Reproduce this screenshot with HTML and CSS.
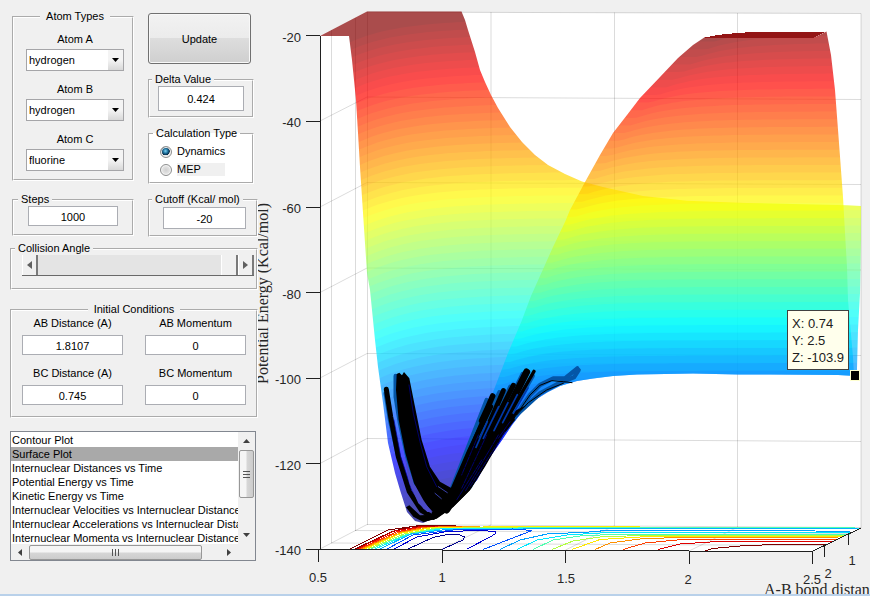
FILE: index.html
```html
<!DOCTYPE html>
<html lang="en">
<head>
    <meta charset="UTF-8">
    <meta name="viewport" content="width=device-width, initial-scale=1.0">
    <title>Potential Energy Surface</title>
    <link rel="stylesheet" href="styles.css">
</head>
<body>
    <form class="sidebar">
        <div class="columns">
            <div class="col-left">
                <fieldset class="atoms">
                    <legend>Atom Types</legend>
                    <div class="field">
                        <label for="atomA">Atom A</label>
                        <select id="atomA" class="dropdown"><option>hydrogen</option><option>fluorine</option></select>
                    </div>
                    <div class="field">
                        <label for="atomB">Atom B</label>
                        <select id="atomB" class="dropdown"><option>hydrogen</option><option>fluorine</option></select>
                    </div>
                    <div class="field">
                        <label for="atomC">Atom C</label>
                        <select id="atomC" class="dropdown"><option>fluorine</option><option>hydrogen</option></select>
                    </div>
                </fieldset>
                <fieldset class="steps">
                    <legend>Steps</legend>
                    <input type="text" aria-label="Steps" value="1000">
                </fieldset>
            </div>
            <div class="col-right">
                <button type="button" class="update">Update</button>
                <fieldset class="delta">
                    <legend>Delta Value</legend>
                    <input type="text" aria-label="Delta Value" value="0.424">
                </fieldset>
                <fieldset class="calc">
                    <legend>Calculation Type</legend>
                    <div class="radio-row">
                        <input type="radio" id="dynamics" name="calc" checked>
                        <label for="dynamics">Dynamics</label>
                    </div>
                    <div class="radio-row">
                        <input type="radio" id="mep" name="calc">
                        <label for="mep" class="shaded">MEP</label>
                    </div>
                </fieldset>
                <fieldset class="cutoff">
                    <legend>Cutoff (Kcal/ mol)</legend>
                    <input type="text" aria-label="Cutoff (Kcal/ mol)" value="-20">
                </fieldset>
            </div>
        </div>

        <fieldset class="collision">
            <legend>Collision Angle</legend>
            <div class="slider">
                <button type="button" class="step" aria-label="Decrease"><svg width="5" height="8"><path d="M5 0V8L0 4Z"/></svg></button>
                <input type="range" aria-label="Collision Angle" min="0" max="180" value="180">
                <button type="button" class="step" aria-label="Increase"><svg width="5" height="8"><path d="M0 0V8L5 4Z"/></svg></button>
            </div>
        </fieldset>

        <fieldset class="initial">
            <legend>Initial Conditions</legend>
            <div class="grid">
                <div class="field"><label for="abd">AB Distance (A)</label><input type="text" id="abd" value="1.8107"></div>
                <div class="field"><label for="abm">AB Momentum</label><input type="text" id="abm" value="0"></div>
                <div class="field"><label for="bcd">BC Distance (A)</label><input type="text" id="bcd" value="0.745"></div>
                <div class="field"><label for="bcm">BC Momentum</label><input type="text" id="bcm" value="0"></div>
            </div>
        </fieldset>

        <div class="listbox">
            <select size="8" aria-label="Plot type">
                <option>Contour Plot</option>
                <option selected>Surface Plot</option>
                <option>Internuclear Distances vs Time</option>
                <option>Potential Energy vs Time</option>
                <option>Kinetic Energy vs Time</option>
                <option>Internuclear Velocities vs Internuclear Distance</option>
                <option>Internuclear Accelerations vs Internuclear Distance</option>
                <option>Internuclear Momenta vs Internuclear Distance</option>
            </select>
            <div class="vbar" aria-hidden="true">
                <svg class="arrow" width="7" height="4"><path d="M0 4H7L3.5 0Z"/></svg>
                <span class="thumb"><svg width="7" height="9"><path d="M0 1.5H7M0 4.5H7M0 7.5H7" stroke="#555"/></svg></span>
                <svg class="arrow end" width="7" height="4"><path d="M0 0H7L3.5 4Z"/></svg>
            </div>
            <div class="hbar" aria-hidden="true">
                <svg class="arrow" width="4" height="7"><path d="M4 0V7L0 3.5Z"/></svg>
                <span class="thumb"><svg width="9" height="7"><path d="M1.5 0V7M4.5 0V7M7.5 0V7" stroke="#555"/></svg></span>
                <svg class="arrow end" width="4" height="7"><path d="M0 0V7L4 3.5Z"/></svg>
            </div>
        </div>
    </form>

    <main class="plot">
        <svg class="axes" viewBox="258 0 612 594" role="img" aria-label="Potential energy surface">
            <defs>
                <clipPath id="backClip"><path d="M320 36L367 11.5H461.5L465 20L468 30L475 52L480 70L485 82L491 95L498 108L510 127L522 142L535 155L548 165L565 174L582 181.5L603 187L643 196L687 200.7L747 203L793 204L847 205.3L861 206V240L860 293L858 330L857 368V376L838 375L770 374.5H738L693 373.5L637 374.5L613 376L593 378.5L577 381L560 386L548 392L535 400L522 412L512 425L502 440L488 460L477 480L463 497L450 508L437 517L423 523L415 521L407 512L400 490L395 473L388 443L383 403L378 367L375 340L370 290L367 273L363 213L360 167L358 133L356 100L352 60L349 36Z"/></clipPath>
                <clipPath id="frontClip"><path d="M705 37H815L826.5 31.5L831 55L835 90L839 143L843 197L845 233L847 267L848 300L850 323L853 357L854 376L838 375L770 374.5H738L693 373.5L637 374.5L613 376L593 378.5L577 381L560 386L548 392L535 400L522 412L512 425L502 440L488 460L477 480L463 497L450 500L452 488L482 420L495 387L508 353L522 320L531 296L553 247L565 222L570 210L585 182L600 155L613 133L627 115L640 98L660 77L678 58L693 45Z"/></clipPath>
            </defs>

            <path fill="#fff" d="M320 36L367 12L861 13.5V528L812 551.5L320 550Z"/>
            <g class="gridlines">
                <path d="M331.5 30V543M355.5 18V531M367.5 12V525M491 12V525M614.5 12.5V526M737.5 13V527M861 13.5V528"/>
                <path d="M367 12L861 13.5M320 121L367 97L861 99.5M320 207L367 182.5L861 184.5M320 292.5L367 268L861 270M320 378L367 353.5L861 355.5M320 463.5L367 438.5L861 441.5M320 549L367 524.5L861 527.5"/>
                <path d="M355 530.5L848 533.5M331 543L824 545.5M442 549L491 525M565.5 550L614 526M689 551L738 527"/>
            </g>

            <g class="contours">
                <path stroke="#800000" d="M350 549L388 530L395 529L420 525.5H456"/>
                <path stroke="#800000" d="M355 549L391 532L410 527L437 526"/>
                <path stroke="#d00000" d="M357 549L394 531L418 527L445 526"/>
                <path stroke="#ff2000" d="M359 549L396 532L420 527.5L450 526.5"/>
                <path stroke="#ff7000" d="M361 549L398 532.5L424 527.5L465 526"/>
                <path stroke="#ffb000" d="M363 549L400 533L427 528L480 526.5"/>
                <path stroke="#fff000" d="M365 549L402 533L430 528L510 526.5L640 526.5"/>
                <path stroke="#b0ff40" d="M368 549L404 534L434 528.5L520 527L820 527"/>
                <path stroke="#50ffb0" d="M371 549L405 535L438 528.5L600 527.5H855"/>
                <path stroke="#10f0ff" d="M375 549L407 535L440 529L600 528.5L859 528.5"/>
                <path stroke="#00b0ff" d="M380 549L411 534L446 529.5L600 528.5L857 529"/>
                <path stroke="#0050ff" d="M387 549L413 535L453 530L513 529L532 530.5L527 532.5L483 549.5"/>
                <path stroke="#0000d0" d="M394 549L417 537L447 531.5L480 530.5L495 531.5V534L490 537L467 549"/>
                <path stroke="#000090" d="M408 549L433 537.5L447 534.5L460 535L464.5 537L463 540L456 543L442 549.5"/>
                <path stroke="#00a0ff" d="M500 549.5L520 540L547 534L600 531.5L600 530.5H780L850 531.5"/>
                <path stroke="#00e8ff" d="M517 549.5L537 540L567 535L600 533L853 532.5"/>
                <path stroke="#50ffb0" d="M533 549.5L553 540L580 536L610 534.5L850 534"/>
                <path stroke="#b0ff40" d="M552 549.5L573 541L600 537L640 535.5H846"/>
                <path stroke="#ffe800" d="M572 549.5L600 539.5L640 537L843 536.5"/>
                <path stroke="#ff9000" d="M595 549.5L610 543L640 539L677 537.5L838 538"/>
                <path stroke="#ff4000" d="M623 549.5L645 543L677 540L836 539.5"/>
                <path stroke="#e00000" d="M658 549.5L680 544L710 542L832 541.5"/>
                <path stroke="#800000" d="M705 551L713 548.5L740 546L773 544.5H827"/>
            </g>

            <g clip-path="url(#backClip)"><g id="backSheet" class="sheet"></g></g>
            <g clip-path="url(#frontClip)"><g id="frontSheet" class="sheet"></g></g>
            <path class="crisp" fill="#931515" d="M705 37.5L717 35L740 32.7L770 31.5H826L814 37.5Z"/>

            <!-- trajectory, drawn in thirds of a unit -->
            <g class="trajectory" transform="translate(370 360) scale(.3333)">
                <g stroke="#0456a8" stroke-width="13">
                    <path d="M430 178L480 105L510 75L550 55L585 55L622 25"/>
                    <path d="M440 165L510 100L570 68L612 52L626 30"/>
                    <path d="M77 48V110L90 190L112 290L138 370"/>
                    <path d="M350 120L240 400M388 97L250 400M421 80L270 400M458 42L290 380M488 48L300 380"/>
                    <path d="M47 100L60 180L85 290"/>
                </g>
                <path fill="#000" d="M80 42L88 38L96 46L102 36L118 55L135 140L155 240L180 320L210 365L245 385L260 352L285 290L330 185L352 165L300 290L262 390L400 205L430 165L435 180L400 225L345 320L300 390L250 440L200 475L160 486L130 470L108 442L118 436L150 466L190 464L160 420L132 370L106 280L86 180L78 90Z"/>
                <path fill="#000" d="M245 385L318 240L372 200L440 150L470 135L440 162L400 222L340 322L300 391L250 441L200 476L160 486L190 455Z"/>
                <g stroke="#000" stroke-width="15">
                    <path d="M49 88L62 170L85 290L118 395L155 452L190 472"/>
                    <path d="M368 108L350 150L335 182" stroke-width="17"/>
                    <path d="M362 140L300 270L235 420"/>
                    <path d="M400 92L360 185L300 310L235 435"/>
                    <path d="M430 76L385 165L320 300L230 440"/>
                    <path d="M470 36L425 125L350 260L230 450" stroke-width="21"/>
                    <path d="M492 34L440 125L370 250L250 430" stroke-width="10"/>
                </g>
                <path stroke="#000" stroke-width="3" d="M425 185L480 105L510 76L545 62L580 65L606 68M440 165L475 128L530 90L580 70"/>
                <g stroke="#0038a8" stroke-width="5">
                    <path d="M386 140L340 235M414 128L372 212M442 104L398 188M474 84L430 160M352 185L318 262"/>
                </g>
                <g stroke="#0000a0" stroke-width="2">
                    <path d="M117 75L130 160L150 245L170 320L200 380M72 180L92 290L125 390L160 440"/>
                    <path d="M325 225L275 345M350 225L275 385M385 225L285 395M405 215L300 380M335 300L260 420M420 185L385 235" stroke-dasharray="14 4"/>
                    <path d="M195 400L214 416M205 380L232 398" stroke="#5560ff"/>
                    <path d="M104 290L130 370L160 425L188 455L172 456L145 430L118 370Z" fill="#4b4ac8" stroke="none"/>
                </g>
            </g>

            <g class="axis-lines">
                <path d="M320 36V550M306 35.5H320M306 121.5H320M306 207.5H320M306 292.5H320M306 378.5H320M306 463.5H320M306 549.5H442"/>
                <path d="M442 550.5H689M689 551.5H812M318.5 550V562M442.5 550V563M565.5 551V563M689.5 552V564M812.5 552V564M824.5 545V557M848.5 533V545"/>
                <path d="M812 551.5L861 528"/>
            </g>

            <g class="ticks" text-anchor="end">
                <text x="301" y="42">-20</text>
                <text x="301" y="127">-40</text>
                <text x="301" y="213">-60</text>
                <text x="301" y="299">-80</text>
                <text x="301" y="384">-100</text>
                <text x="301" y="470">-120</text>
                <text x="301" y="555">-140</text>
            </g>
            <g class="ticks" text-anchor="middle">
                <text x="318" y="582">0.5</text>
                <text x="442" y="582">1</text>
                <text x="566" y="583">1.5</text>
                <text x="688" y="584">2</text>
                <text x="812" y="584">2.5</text>
                <text x="828" y="578">2</text>
                <text x="852" y="565">1</text>
            </g>
            <text class="axis-title" transform="translate(268 384) rotate(-90)">Potential Energy (Kcal/mol)</text>
            <text class="axis-title" x="764" y="595">A-B bond distance</text>

            <rect class="datatip" x="787.5" y="310.5" width="61" height="59"/>
            <g class="tip-text">
                <text x="792" y="328">X: 0.74</text>
                <text x="792" y="345">Y: 2.5</text>
                <text x="792" y="362">Z: -103.9</text>
            </g>
            <rect x="850.5" y="370.5" width="9" height="10" stroke="#ffffd0"/>
        </svg>
    </main>

    <script src="surface.js"></script>
</body>
</html>
```
FILE: surface.js
```js
var SVG = "http://www.w3.org/2000/svg";
var LEVELS = 64;

// jet colormap, t from 0 (lowest energy) to 1 (highest)
function jet(t) {
    function channel(center) {
        var v = 1.5 - Math.abs(4 * t - center);
        return Math.round(255 * Math.max(0, Math.min(1, v)));
    }
    return "rgb(" + channel(3) + "," + channel(2) + "," + channel(1) + ")";
}

function edgeAt(edge, y) {
    for (var i = 1; i < edge.length; i++) {
        if (y <= edge[i][1]) {
            var a = edge[i - 1], b = edge[i];
            return a[0] + (b[0] - a[0]) * (y - a[1]) / (b[1] - a[1]);
        }
    }
    return edge[edge.length - 1][0];
}

// each band runs to the bottom, the next one is painted over it
function drawSheet(id, edge, base, bend, reach) {
    var group = document.getElementById(id);
    for (var i = 0; i < LEVELS; i++) {
        var y = base + i * 488 / LEVELS;
        var left = edgeAt(edge, y);
        var d = "M300 600";
        for (var x = 300; x <= 870; x += 6) {
            var dy = i === 0 ? -40 : bend * Math.exp(-Math.max(0, x - left) / reach);
            d += "L" + x + " " + (y + dy).toFixed(1);
        }
        var path = document.createElementNS(SVG, "path");
        path.setAttribute("d", d + "L870 600Z");
        path.setAttribute("fill", jet(1 - (i + 0.5) / LEVELS));
        group.appendChild(path);
    }
}

drawSheet("backSheet", [[349, 36], [356, 100], [363, 213], [370, 290], [383, 403], [400, 490], [423, 523]], 12, 24, 50);
drawSheet("frontSheet", [[705, 37], [640, 98], [600, 155], [565, 222], [531, 296], [495, 387], [452, 488]], 20, 14, 40);
```
FILE: styles.css
```css
* {
    box-sizing: border-box;
}
body {
    margin: 0;
    min-height: 100vh;
    display: flex;
    align-items: flex-start;
    background: #f0f0f0;
    border-bottom: 2px solid #b9d1ea;
    color: #000;
    font-family: "Liberation Sans", Arial, sans-serif;
    font-size: 11px;
    line-height: 13px;
}
.sidebar {
    flex: 0 0 258px;
    padding: 10px 0 0 10px;
}
.columns {
    display: flex;
    gap: 14px;
    padding-left: 2px;
}
.col-left,
.col-right {
    display: flex;
    flex-direction: column;
}
.col-left {
    flex: 0 0 122px;
    gap: 12px;
}
.col-right {
    flex: 1;
    gap: 9px;
    padding-top: 3px;
}
fieldset {
    min-width: 0;
    margin: 0;
    padding: 0 8px;
    border: 2px groove #fff;
}
legend {
    margin-left: -6px;
    padding: 0 3px;
    white-space: nowrap;
}
input,
button,
select {
    margin: 0;
    font: inherit;
    color: inherit;
}
input[type="text"] {
    display: block;
    width: 100%;
    height: 20px;
    padding: 1px 0 0;
    border: 1px solid #abadb3;
    background: #fff;
    text-align: center;
}
.field {
    display: flex;
    flex-direction: column;
    align-items: center;
}
.atoms legend,
.initial legend {
    margin: 0 auto;
    padding: 0 6px;
}
.atoms {
    display: flex;
    flex-direction: column;
    padding: 10px 8px 8px 12px;
}
.atoms .field {
    gap: 3px;
    margin-bottom: 12px;
}
.atoms .field:last-child {
    margin-bottom: 0;
}
.dropdown {
    appearance: none;
    width: 100%;
    height: 22px;
    padding: 1px 18px 0 2px;
    border: 1px solid #a5a5a8;
    border-radius: 0;
    background:
        url("data:image/svg+xml,%3Csvg xmlns='http://www.w3.org/2000/svg' width='7' height='4'%3E%3Cpath d='M0 0H7L3.5 4Z'/%3E%3C/svg%3E") right 4px center no-repeat,
        linear-gradient(#f4f4f4 50%, #d8d8d8) right / 15px 100% no-repeat,
        #fff;
}
.steps {
    padding: 0 14px 8px;
}
.steps legend {
    margin-left: -10px;
}
.update {
    width: 103px;
    height: 51px;
    padding-top: 3px;
    border: 1px solid #707070;
    border-radius: 3px;
    background: linear-gradient(#f2f2f2, #ebebeb 50%, #dddddd 50%, #cfcfcf);
    box-shadow: inset 0 0 0 1px #f8f8f8;
}
.delta,
.calc {
    width: 106px;
}
.delta {
    padding-bottom: 5px;
}
.delta input[type="text"] {
    height: 25px;
}
.calc {
    padding: 5px 8px 6px 10px;
    background: #fff;
}
.calc legend {
    margin-left: -7px;
}
.radio-row {
    display: flex;
    align-items: center;
    gap: 5px;
}
.radio-row + .radio-row {
    margin-top: 5px;
}
.radio-row input {
    appearance: none;
    width: 12px;
    height: 12px;
    border: 1px solid #8e8f8f;
    border-radius: 50%;
    background: radial-gradient(#d0d0d0, #f4f4f4);
    box-shadow: inset 0 0 0 1px #f4f4f4;
}
.radio-row input:checked {
    background: radial-gradient(circle at 45% 40%, #7fd4f5, #1b6d99 30%, #0b2c47 50%, #e4e4e4 55%);
}
.shaded {
    flex: 0 0 48px;
    background: #f0f0f0;
}
.cutoff {
    padding: 1px 10px 6px 13px;
}
.cutoff legend {
    margin-left: -11px;
}
.cutoff input[type="text"] {
    height: 22px;
}
.collision {
    margin-top: 5px;
    padding: 0 2px 12px 10px;
}
.collision legend {
    margin-left: -7px;
}
.slider {
    display: flex;
    height: 21px;
    border-bottom: 1px solid #696969;
    background: #e4e4e4;
}
.step {
    flex: 0 0 16px;
    padding: 0;
    border: 0;
    border-right: 2px solid #7a7a7a;
    border-left: 1px solid #fff;
    background: #f0f0f0;
    line-height: 0;
}
.step svg {
    fill: #606060;
}
.slider input {
    appearance: none;
    flex: 1;
    min-width: 0;
    height: 20px;
    background: #e4e4e4;
}
.slider input::-webkit-slider-thumb {
    appearance: none;
    width: 17px;
    height: 20px;
    border-right: 2px solid #7a7a7a;
    border-left: 1px solid #fff;
    background: #f0f0f0;
}
.initial {
    margin-top: 13px;
    padding: 1px 10px 11px;
}
.initial .grid {
    display: grid;
    grid-template-columns: 1fr 1fr;
    gap: 12px 22px;
}
.initial .field {
    gap: 5px;
}
.listbox {
    display: grid;
    grid-template-columns: 1fr 17px;
    grid-template-rows: 112px 16px;
    margin: 13px 2px 0 0;
    border: 1px solid #828790;
    background: #f0f0f0;
}
.listbox select {
    width: 100%;
    height: 112px;
    min-width: 0;
    padding: 1px 0 0;
    border: 0;
    border-radius: 0;
    outline: 0;
    background: #fff;
    overflow: hidden;
    scrollbar-width: none;
}
.listbox option {
    height: 14px;
    min-height: 14px;
    padding: 1px 1px 0;
    line-height: 13px;
    color: #000;
}
.listbox option:checked {
    background: linear-gradient(#a9a9a9, #a9a9a9);
    color: #000;
}
.vbar,
.hbar {
    display: flex;
    align-items: center;
}
.vbar {
    flex-direction: column;
    padding: 7px 0;
}
.hbar {
    padding: 0 7px;
}
.arrow {
    fill: #404040;
}
.arrow.end {
    margin-top: auto;
}
.hbar .arrow.end {
    margin: 0 0 0 auto;
}
.thumb {
    display: flex;
    align-items: center;
    justify-content: center;
    border: 1px solid #979797;
    border-radius: 2px;
}
.vbar .thumb {
    width: 15px;
    height: 48px;
    margin-top: 7px;
    background: linear-gradient(90deg, #f5f5f5 45%, #d6d6d6 55%, #cccccc);
}
.hbar .thumb {
    width: 173px;
    height: 15px;
    margin-left: 7px;
    background: linear-gradient(#f5f5f5 45%, #d6d6d6 55%, #cccccc);
}
.plot {
    flex: 1;
    min-width: 0;
}
.axes {
    display: block;
    width: 100%;
}
.gridlines {
    fill: none;
    stroke: #000;
    stroke-opacity: 0.14;
}
.contours {
    fill: none;
    stroke-width: 1;
    shape-rendering: crispEdges;
}
.sheet {
    opacity: 0.7;
}
.crisp {
    shape-rendering: crispEdges;
}
.trajectory {
    fill: none;
    stroke-linecap: round;
    stroke-linejoin: round;
}
.axis-lines {
    fill: none;
    stroke: #202020;
    shape-rendering: crispEdges;
}
.ticks {
    font-size: 13px;
    fill: #262626;
}
.axis-title {
    font-family: "Liberation Serif", "Times New Roman", serif;
    font-size: 16px;
    fill: #262626;
}
.datatip {
    fill: #ffffec;
    stroke: #404040;
}
.tip-text {
    font-size: 13px;
    fill: #202020;
}
```
